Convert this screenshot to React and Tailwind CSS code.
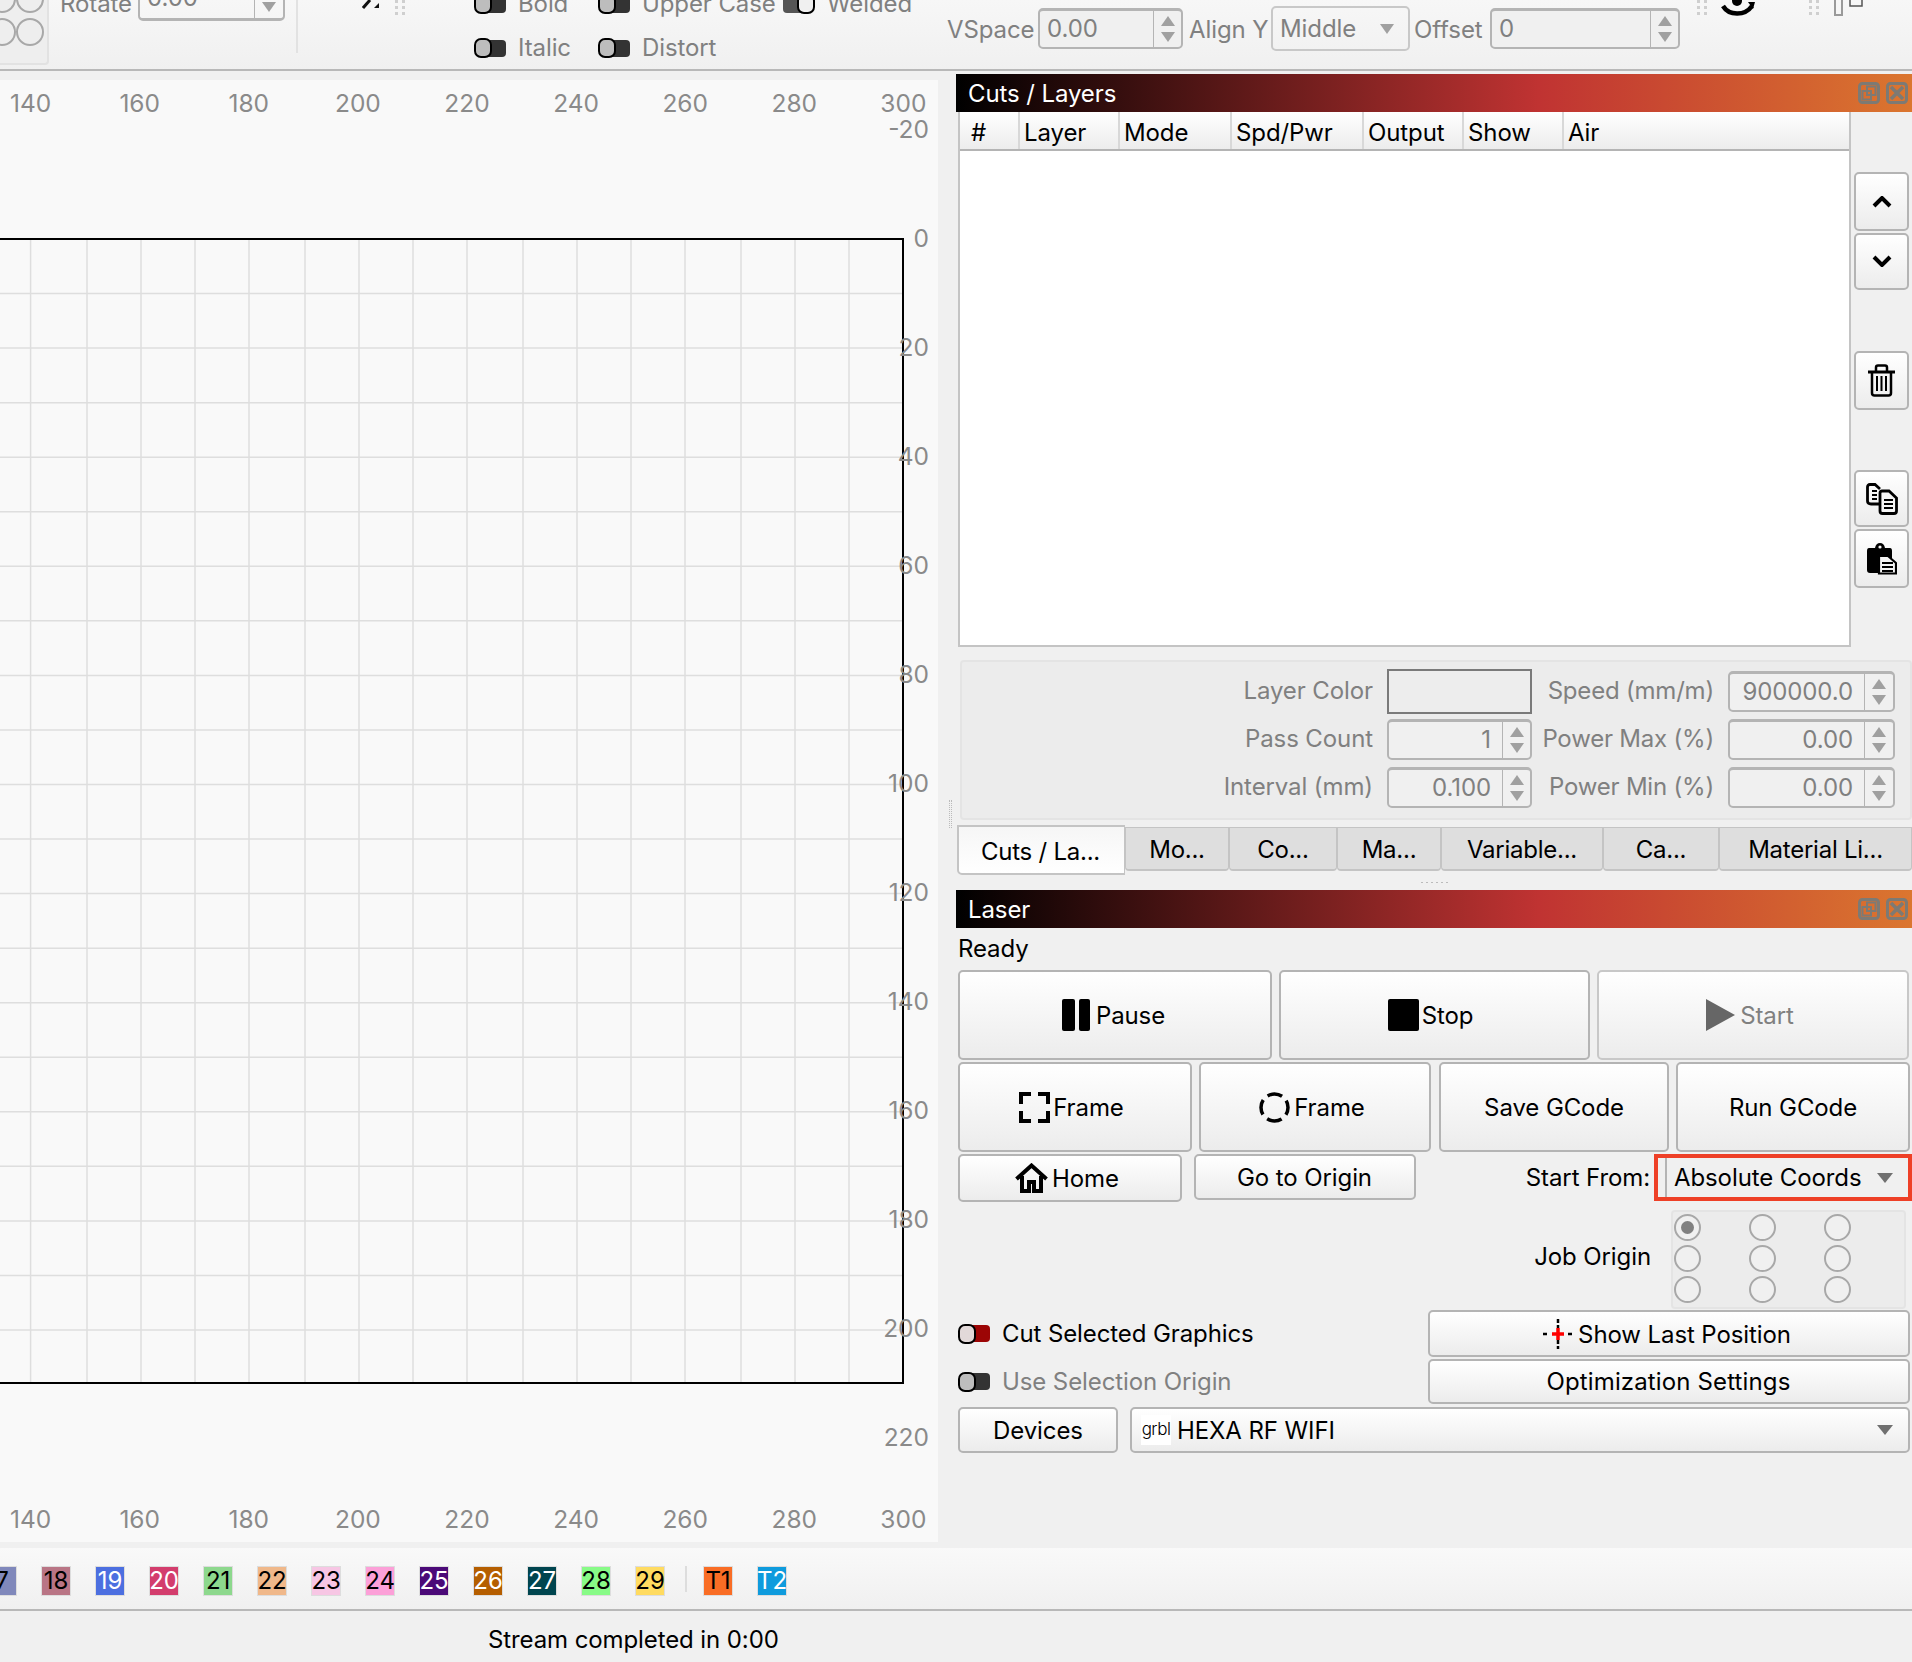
import React from "react";

const XLABELS = [140, 160, 180, 200, 220, 240, 260, 280, 300];
const YLABELS = [-20, 0, 20, 40, 60, 80, 100, 120, 140, 160, 180, 200, 220];
const STEP = 109.1;

// the grid lines sit on whole device pixels in the original, so they are not evenly spaced
const GRID_X = [30.6, 87, 141, 195, 249, 305, 359, 413, 467, 523, 577, 631, 685, 741, 795, 849];

const SWATCHES = [
  ["7", "bg-[#8088bb]", "text-black"],
  ["18", "bg-[#b97585]", "text-black"],
  ["19", "bg-[#4c6fe0]", "text-white"],
  ["20", "bg-[#d33d6d]", "text-white"],
  ["21", "bg-[#8dd88d]", "text-black"],
  ["22", "bg-[#f0b88a]", "text-black"],
  ["23", "bg-[#f7c6e4]", "text-black"],
  ["24", "bg-[#fca0d8]", "text-black"],
  ["25", "bg-[#4b0a78]", "text-white"],
  ["26", "bg-[#b55e00]", "text-white"],
  ["27", "bg-[#00454f]", "text-white"],
  ["28", "bg-[#88fb87]", "text-black"],
  ["29", "bg-[#ffdb60]", "text-black"],
];

const HEADERS = [
  ["#", "w-[60px] pl-[11px]"],
  ["Layer", "w-[100px] pl-[4px]"],
  ["Mode", "w-[112px] pl-[4px]"],
  ["Spd/Pwr", "w-[132px] pl-[4px]"],
  ["Output", "w-[100px] pl-[4px]"],
  ["Show", "w-[100px] pl-[4px]"],
  ["Air", "flex-1 pl-[4px]"],
];

const Arrow = ({ className = "text-[#8a8a8a]", w = 14, h = 10, up = false }) => (
  <svg width={w} height={h} viewBox="0 0 14 10" preserveAspectRatio="none" className={className}>
    <path d={up ? "M7 0L14 10H0Z" : "M0 0H14L7 10Z"} fill="currentColor" />
  </svg>
);

const Spin = ({ value, className, right = false, arrowW = "w-[28px]" }) => (
  <div className={`flex h-[41px] rounded-[5px] border-2 border-t-[3px] border-[#b4b4b4] bg-[#f0f0f0] text-[#808080] ${className}`}>
    <div className={`flex flex-1 items-center ${right ? "justify-end pr-[11px]" : "pl-[7px]"}`}>{value}</div>
    <div className={`flex ${arrowW} flex-col items-center justify-center gap-[6px] border-l border-[#b4b4b4]`}>
      <Arrow up className="text-[#a0a0a0]" />
      <Arrow className="text-[#a0a0a0]" />
    </div>
  </div>
);

const Btn = ({ children, className = "", disabled = false }) => (
  <div
    className={`flex items-center justify-center rounded-[5px] border-2 bg-linear-to-b from-white to-[#ececec] ${
      disabled ? "border-[#c8c8c8] text-[#808080]" : "border-[#b4b4b4] text-black"
    } ${className}`}
  >
    {children}
  </div>
);

const Toggle = ({ on = false, knob = "bg-[#bdbdbd]", track = "bg-[#333]" }) =>
  on ? (
    <div className="flex h-[20px] w-[32px] items-center">
      <div className="-mr-[4px] h-[17px] w-[18px] rounded-l-[4px] bg-[#555]" />
      <div className="relative h-[20px] w-[18px] rounded-[7px] border-2 border-black bg-[#f0f0f0]" />
    </div>
  ) : (
    <div className="flex h-[20px] w-[32px] items-center">
      <div className={`relative z-10 h-[20px] w-[18px] rounded-[7px] border-2 border-black ${knob}`} />
      <div className={`-ml-[4px] h-[17px] w-[18px] rounded-r-[4px] ${track}`} />
    </div>
  );

const GripDots = ({ className = "" }) => (
  <svg width="10" height="16" viewBox="0 0 10 16" className={className}>
    {[0, 6, 12].map((y) => (
      <g key={y} fill="#cfcfcf">
        <rect x="0" y={y} width="3" height="3" />
        <rect x="7" y={y} width="3" height="3" />
      </g>
    ))}
  </svg>
);

const TitleBar = ({ title }) => (
  <div className="flex h-[38px] items-center justify-between bg-[linear-gradient(90deg,#000_0%,#c03332_61%,#db762f_100%)] pl-[12px] pr-[4px] text-white">
    <span className="pt-[2px]">{title}</span>
    <div className="flex gap-[6px] text-[#7d7a74]">
      <svg width="22" height="22" viewBox="0 0 22 22" fill="none" stroke="currentColor" strokeWidth="3">
        <rect x="1.5" y="1.5" width="19" height="19" rx="3" />
        <rect x="4.5" y="9" width="8.5" height="8.5" strokeWidth="2" />
        <rect x="9" y="4.5" width="8.5" height="8.5" strokeWidth="2" />
      </svg>
      <svg width="22" height="22" viewBox="0 0 22 22" fill="none" stroke="currentColor" strokeWidth="3">
        <rect x="1.5" y="1.5" width="19" height="19" rx="3" />
        <path d="M5 5L17 17M17 5L5 17" strokeWidth="3.5" />
      </svg>
    </div>
  </div>
);

const Radio = ({ checked = false }) => (
  <div className="flex h-[27px] w-[27px] items-center justify-center rounded-full border-2 border-[#a8a8a8] bg-[#f0f0f0]">
    {checked && <div className="h-[13px] w-[13px] rounded-full bg-[#808080]" />}
  </div>
);

function Toolbar() {
  return (
    <div className="flex h-[69px] items-start overflow-hidden bg-linear-to-b from-[#f7f7f7] to-[#f0f0f0] text-[#808080]">
      {/* clipped radio group */}
      <div className="h-[65px] w-[49px] shrink-0 overflow-hidden rounded-br-[4px] border-r-2 border-b-2 border-[#e2e2e2] bg-[#eeeeee]">
        <div className="-ml-[12px] -mt-[15px] grid w-[56px] grid-cols-2 gap-y-[5px]">
          <div className="h-[28px] w-[28px] rounded-full border-2 border-[#a8a8a8]" />
          <div className="h-[28px] w-[28px] rounded-full border-2 border-[#a8a8a8]" />
          <div className="h-[28px] w-[28px] rounded-full border-2 border-[#a8a8a8]" />
          <div className="h-[28px] w-[28px] rounded-full border-2 border-[#a8a8a8]" />
        </div>
      </div>
      <span className="-mt-[11px] ml-[11px] w-[72px] shrink-0 leading-[30px]">Rotate</span>
      <div className="-mt-[25px] ml-[6px] flex h-[46px] w-[147px] shrink-0 rounded-[5px] border-2 border-b-[3px] border-[#b4b4b4]">
        <div className="flex flex-1 items-center pl-[7px]">0.00</div>
        <div className="flex w-[29px] items-end justify-center border-l border-[#b4b4b4] pb-[6px]">
          <Arrow className="text-[#a0a0a0]" />
        </div>
      </div>
      <div className="ml-[11px] h-[53px] w-[2px] shrink-0 bg-[#e2e2e2]" />
      <svg width="18" height="9" viewBox="0 0 18 9" className="ml-[64px] shrink-0">
        <path d="M1 8L8 0" stroke="#111" strokeWidth="3" fill="none" />
        <path d="M12 8L17 3V8Z" fill="#111" />
      </svg>
      <GripDots className="ml-[15px] shrink-0" />

      <div className="-mt-[11px] ml-[69px] flex w-[124px] shrink-0 flex-col gap-[14px] leading-[30px]">
        <div className="flex items-center gap-[12px]"><Toggle /><span>Bold</span></div>
        <div className="flex items-center gap-[12px]"><Toggle /><span>Italic</span></div>
      </div>
      <div className="-mt-[11px] flex w-[185px] shrink-0 flex-col gap-[14px] leading-[30px]">
        <div className="flex items-center gap-[12px]"><Toggle /><span>Upper Case</span></div>
        <div className="flex items-center gap-[12px]"><Toggle /><span>Distort</span></div>
      </div>
      <div className="-mt-[11px] flex w-[164px] shrink-0 items-center gap-[12px] leading-[30px]">
        <Toggle on /><span>Welded</span>
      </div>

      <span className="mt-[15px] w-[91px] shrink-0 leading-[30px]">VSpace</span>
      <Spin value="0.00" className="mt-[8px] w-[145px] shrink-0" />
      <span className="ml-[6px] mt-[15px] w-[82px] shrink-0 leading-[30px]">Align Y</span>
      <div className="mt-[6px] flex h-[45px] w-[139px] shrink-0 items-center justify-between rounded-[5px] border-2 border-[#c8c8c8] pl-[7px] pr-[14px]">
        <span>Middle</span>
        <Arrow className="text-[#a0a0a0]" />
      </div>
      <span className="ml-[4px] mt-[15px] w-[76px] shrink-0 leading-[30px]">Offset</span>
      <Spin value="0" className="mt-[8px] w-[190px] shrink-0" />
      <GripDots className="ml-[17px] shrink-0" />
      <svg width="34" height="17" viewBox="0 0 34 17" className="ml-[14px] shrink-0">
        <path d="M2 6C8 16 24 16 31 6" stroke="#000" strokeWidth="4.5" fill="none" />
        <circle cx="16" cy="1" r="5" fill="#000" />
        <path d="M27 2H34L32 9Z" fill="#000" />
      </svg>
      <GripDots className="ml-[54px] shrink-0" />
      <svg width="30" height="16" viewBox="0 0 30 16" className="ml-[15px] shrink-0">
        <rect x="1" y="-4" width="7" height="19" fill="none" stroke="#9a9a9a" strokeWidth="2" />
        <rect x="16" y="-4" width="12" height="10" fill="none" stroke="#555" strokeWidth="1.5" />
      </svg>
    </div>
  );
}

function Canvas() {
  const hLines = [];
  for (let k = 1; 239 + (k * STEP) / 2 < 1383; k++) hLines.push(159 + (k * STEP) / 2);

  return (
    <div className="relative mt-[9px] h-[1462px] w-[938px] shrink-0 overflow-hidden bg-[#f9f9f9] text-[24.5px] tracking-normal text-[#8a8a8a]">
      <svg width="938" height="1462" className="absolute left-0 top-0">
        {GRID_X.map((x) => (
          <line key={x} x1={x} x2={x} y1="159" y2="1303" stroke="#dedede" strokeWidth="1.5" />
        ))}
        {hLines.map((y) => (
          <line key={y} x1="0" x2="903" y1={y} y2={y} stroke="#dedede" strokeWidth="1.5" />
        ))}
        <path d="M0 159H903V1303H0" fill="none" stroke="#000" strokeWidth="2" />
      </svg>
      {XLABELS.map((v, i) => (
        <React.Fragment key={v}>
          <span className="absolute top-[8px] w-[60px] -translate-x-1/2 text-center leading-[30px]" style={{ left: 30.6 + i * STEP }}>{v}</span>
          <span className="absolute top-[1424px] w-[60px] -translate-x-1/2 text-center leading-[30px]" style={{ left: 30.6 + i * STEP }}>{v}</span>
        </React.Fragment>
      ))}
      {YLABELS.map((v, i) => (
        <span key={v} className="absolute left-[869px] w-[60px] text-right leading-[30px]" style={{ top: 34 + i * 109 }}>{v}</span>
      ))}
    </div>
  );
}

function LayersPanel() {
  return (
    <>
      <TitleBar title="Cuts / Layers" />
      <div className="flex h-[535px] pl-[2px]">
        <div className="h-full w-[893px] border-x-2 border-b-2 border-[#c4c4c4] bg-white">
          <div className="flex h-[39px] border-b-2 border-[#b4b4b4] bg-linear-to-b from-white to-[#ececec] text-black">
            {HEADERS.map(([label, cls]) => (
              <div key={label} className={`flex items-center border-r-2 border-[#d8d8d8] pt-[4px] last:border-r-0 ${cls}`}>{label}</div>
            ))}
          </div>
        </div>
        <div className="ml-[3px] flex w-[55px] flex-col pt-[60px]">
          <Btn className="h-[59px]">
            <svg width="20" height="12" viewBox="0 0 20 12"><path d="M2 10L10 2L18 10" fill="none" stroke="#000" strokeWidth="4" /></svg>
          </Btn>
          <Btn className="mt-[2px] h-[57px] pb-[2px]">
            <svg width="20" height="12" viewBox="0 0 20 12"><path d="M2 2L10 10L18 2" fill="none" stroke="#000" strokeWidth="4" /></svg>
          </Btn>
          <Btn className="mt-[61px] h-[59px]">
            <svg width="27" height="33" viewBox="0 0 27 33" fill="none" stroke="#000">
              <path d="M0 8H27" strokeWidth="3" />
              <path d="M8 7V3.5Q8 1.5 10 1.5H17Q19 1.5 19 3.5V7" strokeWidth="2.5" />
              <path d="M4 8V29Q4 31.5 6.5 31.5H20.5Q23 31.5 23 29V8" strokeWidth="2.5" />
              <path d="M9 12V27M13.5 12V27M18 12V27" strokeWidth="2" />
            </svg>
          </Btn>
          <Btn className="mt-[60px] h-[57px]">
            <svg width="32" height="32" viewBox="0 0 32 32" fill="none" stroke="#000" strokeWidth="2.8">
              <path d="M13 21H5Q1.5 21 1.5 18V4Q1.5 1.5 4 1.5H9L14 6" />
              <path d="M6 8H11M6 12H11M6 16H11" strokeWidth="2" />
              <path d="M14 10Q14 8 16 8H23L30.5 15V28Q30.5 30.5 28 30.5H16.5Q14 30.5 14 28Z" fill="#f6f6f6" />
              <path d="M18 17H27M18 21H27M18 25H27" strokeWidth="2" />
            </svg>
          </Btn>
          <Btn className="mt-[2px] h-[59px]">
            <svg width="30" height="32" viewBox="0 0 30 32">
              <path d="M2 5H8Q9 0 13 0Q17 0 18 5H23Q25 5 25 8V30H3Q0 30 0 27V8Q0 5 2 5Z" fill="#000" />
              <circle cx="13" cy="4" r="1.6" fill="#f6f6f6" />
              <path d="M12 13H21L29 20V30.5H12Z" fill="#f6f6f6" stroke="#000" strokeWidth="2.2" />
              <path d="M15 20H26M15 24H26M15 28H26" stroke="#000" strokeWidth="2" />
            </svg>
          </Btn>
        </div>
      </div>

      <div className="ml-[4px] mt-[13px] grid h-[160px] grid-cols-[411px_145px_168px_167px] grid-rows-[40px_40px_40px] content-start items-center gap-x-[14px] gap-y-[8px] whitespace-nowrap rounded-[4px] border-2 border-[#e4e4e4] bg-[#ececec] pt-[9px] text-[#808080]">
        <span className="text-right">Layer Color</span>
        <div className="-my-[3px] h-[45px] border-2 border-[#7a7a7a] bg-[#ededed]" />
        <span className="-ml-[8px] text-right tracking-[-0.2px]">Speed (mm/m)</span>
        <Spin value="900000.0" right className="h-[40px]" arrowW="w-[29px]" />
        <span className="text-right">Pass Count</span>
        <Spin value="1" right className="h-[40px]" />
        <span className="-ml-[8px] text-right tracking-[-0.2px]">Power Max (%)</span>
        <Spin value="0.00" right className="h-[40px]" arrowW="w-[29px]" />
        <span className="text-right">Interval (mm)</span>
        <Spin value="0.100" right className="h-[40px]" />
        <span className="-ml-[8px] text-right tracking-[-0.2px]">Power Min (%)</span>
        <Spin value="0.00" right className="h-[40px]" arrowW="w-[29px]" />
      </div>

      <div className="ml-px mt-[5px] flex h-[50px] items-start tracking-[-0.25px] text-black">
        <div className="flex h-[50px] w-[168px] items-center justify-center rounded-bl-[5px] border-2 border-r border-[#c4c4c4] bg-linear-to-b from-[#f6f6f6] to-white pr-[2px] pt-[3px]">Cuts / La...</div>
        {[
          ["Mo...", "w-[104px]"],
          ["Co...", "w-[108px]"],
          ["Ma...", "w-[104px]"],
          ["Variable...", "w-[162px]"],
          ["Ca...", "w-[116px]"],
          ["Material Li...", "w-[193px]"],
        ].map(([label, w]) => (
          <div key={label} className={`mt-[2px] flex h-[44px] ${w} items-center justify-center rounded-b-[4px] border border-b-2 border-[#c4c4c4] bg-[#dedede] pt-[2px]`}>{label}</div>
        ))}
      </div>
      <div className="flex h-[15px] items-center justify-center gap-[3px]">
        {[0, 1, 2, 3, 4, 5].map((i) => (
          <div key={i} className="h-[1px] w-[2px] bg-[#bbbbbb]" />
        ))}
      </div>
    </>
  );
}

function LaserPanel() {
  return (
    <>
      <TitleBar title="Laser" />
      <div className="flex h-[42px] items-start pl-[2px] pt-[6px] leading-[30px] text-black">Ready</div>
      <div className="flex gap-[7px] pl-[2px]">
        <Btn className="h-[90px] w-[314px] gap-[6px] pr-[3px]">
          <div className="flex gap-[4px]">
            <div className="h-[32px] w-[13px] rounded-[2px] bg-black" />
            <div className="h-[32px] w-[11px] rounded-[2px] bg-black" />
          </div>
          <span className="pt-[2px]">Pause</span>
        </Btn>
        <Btn className="h-[90px] w-[311px] gap-[3px] pr-[8px]">
          <div className="h-[32px] w-[31px] rounded-[2px] bg-black" />
          <span className="pt-[2px]">Stop</span>
        </Btn>
        <Btn disabled className="h-[90px] w-[312px] gap-[5px] pr-[6px]">
          <svg width="29" height="32" viewBox="0 0 29 32"><path d="M0 0L29 16L0 32Z" fill="#666" /></svg>
          <span className="pt-[2px]">Start</span>
        </Btn>
      </div>
      <div className="mt-[2px] flex pl-[2px]">
        <Btn className="h-[90px] w-[234px] gap-[3px] pr-[7px]">
          <svg width="31" height="31" viewBox="0 0 31 31" fill="none" stroke="#000" strokeWidth="4">
            <path d="M2 12V2H12M19 2H29V12M29 19V29H19M12 29H2V19" />
          </svg>
          <span className="pt-[2px]">Frame</span>
        </Btn>
        <Btn className="ml-[7px] h-[90px] w-[232px] gap-[4px] pr-[6px]">
          <svg width="31" height="31" viewBox="0 0 31 31" fill="none" stroke="#000" strokeWidth="3.5">
            <circle cx="15.5" cy="15.5" r="13.5" strokeDasharray="15.2 6" strokeDashoffset="7.6" />
          </svg>
          <span className="pt-[2px]">Frame</span>
        </Btn>
        <Btn className="ml-[8px] h-[90px] w-[230px]"><span className="pt-[2px]">Save GCode</span></Btn>
        <Btn className="ml-[7px] h-[90px] w-[234px]"><span className="pt-[2px]">Run GCode</span></Btn>
      </div>
      <div className="mt-[2px] flex h-[48px] items-start pl-[2px]">
        <Btn className="h-[48px] w-[224px] gap-[4px] pr-[6px]">
          <svg width="33" height="30" viewBox="0 0 33 30" fill="none" stroke="#000" strokeWidth="4">
            <path d="M1.5 16L16.5 2.5L31.5 16" />
            <path d="M7 13V28H14V19H19V28H26V13" />
          </svg>
          <span className="pt-[2px]">Home</span>
        </Btn>
        <Btn className="ml-[12px] h-[46px] w-[222px] pr-[1px]"><span className="pt-[2px]">Go to Origin</span></Btn>
        <span className="flex-1 pr-[4px] pt-[1px] text-right leading-[46px] text-black">Start From:</span>
        <div className="flex h-[47px] w-[258px] shrink-0 items-center border-[4px] border-[#ee4027] pl-[7px] pr-[15px] text-black">
          <div className="h-full w-[2px] bg-[#b4b4b4]" />
          <span className="ml-[7px] flex-1">Absolute Coords</span>
          <Arrow w={16} className="text-[#707070]" />
        </div>
      </div>
      <div className="mt-[8px] flex h-[99px] items-center justify-end pr-[6px] text-black">
        <span className="pb-[6px] pr-[20px]">Job Origin</span>
        <div className="grid h-[99px] w-[235px] grid-cols-[75px_75px_75px] rounded-[4px] border-2 border-[#e4e4e4] bg-[#ececec] pl-[1px] pt-[2px]">
          {[true, false, false, false, false, false, false, false, false].map((c, i) => (
            <div key={i} className="h-[30px]"><Radio checked={c} /></div>
          ))}
        </div>
      </div>
      <div className="mt-[1px] grid grid-cols-[469.5px_482px] grid-rows-[47px_45px] gap-y-[2px] pl-[2px]">
        <div className="flex items-center gap-[12px] text-black">
          <Toggle knob="bg-[#e2d9d9]" track="bg-[#9c0505]" />
          <span>Cut Selected Graphics</span>
        </div>
        <Btn className="gap-[5px] pr-[3px]">
          <svg width="30" height="30" viewBox="0 0 30 30">
            <path d="M15 0V9M15 21V30M0 15H5M25 15H30" stroke="#000" strokeWidth="2.5" strokeDasharray="4 2" />
            <path d="M15 9V21M9 15H21" stroke="#f00" strokeWidth="3.5" />
          </svg>
          <span className="pt-[2px]">Show Last Position</span>
        </Btn>
        <div className="flex items-center gap-[12px] text-[#808080]">
          <Toggle />
          <span>Use Selection Origin</span>
        </div>
        <Btn><span className="pt-[1px] tracking-[0.14px]">Optimization Settings</span></Btn>
      </div>
      <div className="mt-[3px] flex h-[46px] gap-[12px] pl-[2px] text-black">
        <Btn className="w-[160px]"><span className="pt-[1px]">Devices</span></Btn>
        <Btn className="w-[780px] !justify-start pl-[9px] pr-[15px]">
          <span className="flex h-[30px] w-[30px] items-center justify-center bg-white text-[17px] font-light tracking-[-0.5px]">grbl</span>
          <span className="ml-[6px] flex-1 pt-[1px]">HEXA RF WIFI</span>
          <Arrow w={16} className="text-[#707070]" />
        </Btn>
      </div>
    </>
  );
}

export default function App() {
  return (
    <div className="flex h-[1662px] w-[1912px] flex-col overflow-hidden bg-[#f0f0f0] text-[24px] tracking-[-0.1px] [font-family:Inter,sans-serif]">
      <Toolbar />
      <div className="h-[2px] bg-[#b8b8b8]" />

      <div className="flex h-[1477px] shrink-0">
        <Canvas />
        <div className="flex w-[18px] shrink-0 justify-center pt-[729px] pl-[6px]">
          <div className="h-[28px] w-[3px] border-x border-dotted border-[#bbbbbb]" />
        </div>
        <div className="w-[956px] shrink-0 overflow-hidden pt-[3px]">
          <LayersPanel />
          <LaserPanel />
        </div>
      </div>

      {/* palette strip */}
      <div className="flex h-[61px] shrink-0 items-start bg-linear-to-b from-[#f9f9f9] to-[#f0f0f0] pt-[18px]">
        <div className="-ml-[13px] flex gap-[24px]">
          {SWATCHES.map(([n, bg, fg]) => (
            <div key={n} className={`flex h-[30px] w-[30px] items-center justify-center border border-[#dddddd] ${bg} ${fg}`}>{n}</div>
          ))}
        </div>
        <div className="ml-[20px] h-[26px] w-[2px] bg-[#dddddd]" />
        <div className="ml-[16px] flex h-[30px] w-[30px] items-center justify-center border border-[#dddddd] bg-[#f96d25] text-black">T1</div>
        <div className="ml-[24px] flex h-[30px] w-[30px] items-center justify-center border border-[#dddddd] bg-[#0f9bdd] text-white">T2</div>
      </div>
      <div className="h-[2px] shrink-0 bg-[#b8b8b8]" />

      <div className="flex flex-1 items-center pl-[488px] pt-[7px] text-black">Stream completed in 0:00</div>
    </div>
  );
}
